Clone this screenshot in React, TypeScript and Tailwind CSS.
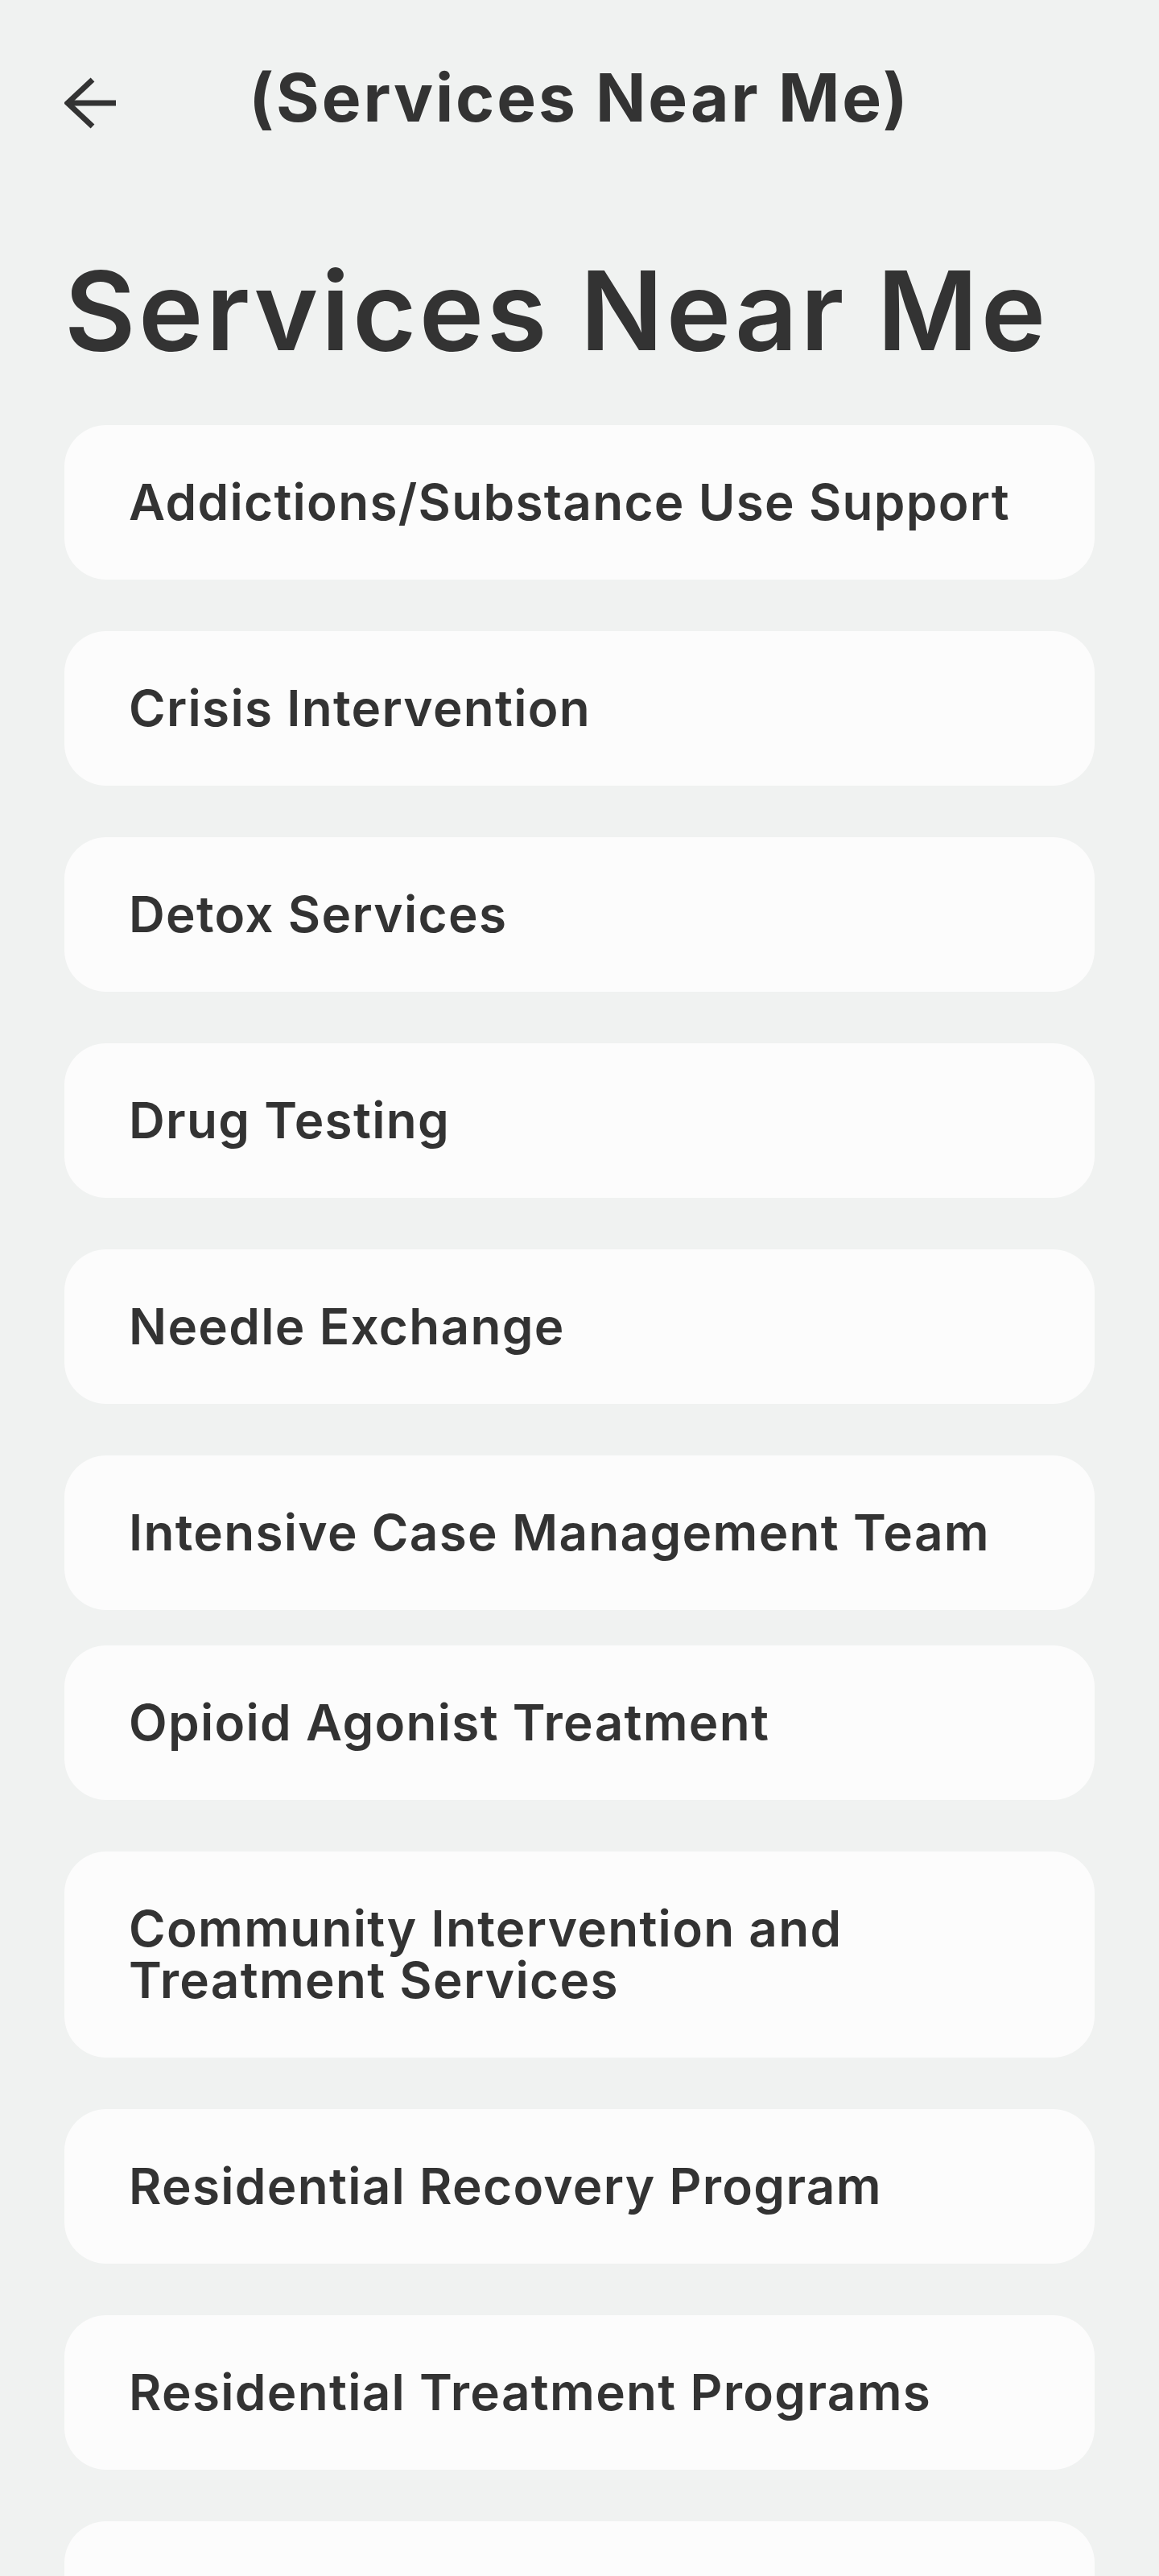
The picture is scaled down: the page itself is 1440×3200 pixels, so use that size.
import React from 'react';

const services = [
  'Addictions/Substance Use Support',
  'Crisis Intervention',
  'Detox Services',
  'Drug Testing',
  'Needle Exchange',
  'Intensive Case Management Team',
  'Opioid Agonist Treatment',
  'Community Intervention and Treatment Services',
  'Residential Recovery Program',
  'Residential Treatment Programs',
];

function BackArrow() {
  return (
    <svg width="64" height="64" viewBox="0 0 64 64" fill="none" stroke="#333333" strokeWidth="7">
      <path d="M3 32H64" />
      <path d="M35 3L4 32L35 61" />
    </svg>
  );
}

export default function App() {
  return (
    <div
      className="min-h-screen bg-[#f0f2f1] text-[#333333] px-20 pt-[81px] pb-20"
      style={{ fontFamily: 'Inter, "Noto Sans", sans-serif' }}
    >
      {/* top bar */}
      <header className="grid grid-cols-[1fr_auto_1fr] items-center h-[82px]">
        <button className="w-16 h-16 flex items-center justify-center mt-3">
          <BackArrow />
        </button>
        <h1 className="text-[82px] leading-none font-bold tracking-[0.035em]">(Services Near Me)</h1>
        <div />
      </header>

      <h2 className="mt-[155px] text-[136px] leading-none font-semibold tracking-[0.026em]">
        Services Near Me
      </h2>

      {/* service list */}
      <ul className="mt-[74px] flex flex-col gap-16">
        {services.map((s, i) => (
          <li
            key={s}
            className={`rounded-[52px] bg-[#fcfcfc] px-20 py-16 text-[62px] leading-[64px] font-semibold tracking-[0.021em] ${
              i === 6 ? '-mt-5' : ''
            }`}
          >
            {s}
          </li>
        ))}
        {/* next card, cut off by the bottom edge */}
        <li className="rounded-[52px] bg-[#fcfcfc] h-[192px]" />
      </ul>
    </div>
  );
}
